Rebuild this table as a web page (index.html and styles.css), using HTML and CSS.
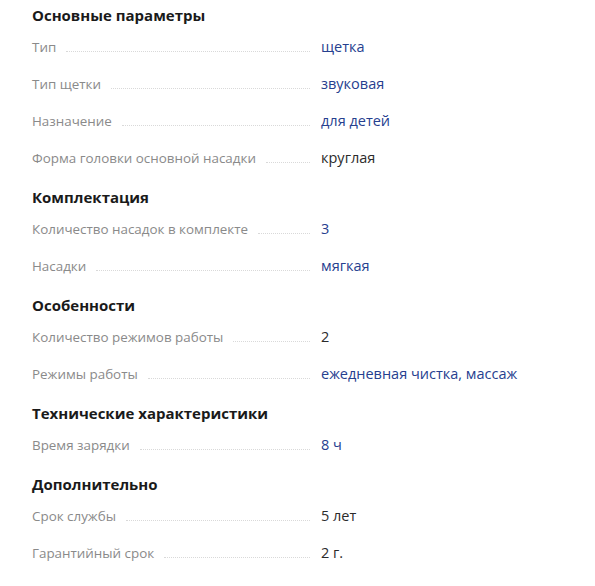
FILE: index.html
```html
<!DOCTYPE html>
<html lang="ru">
<head>
<meta charset="utf-8">
<title>Характеристики</title>
<link rel="stylesheet" href="styles.css">
</head>
<body>
<div class="specs">
  <section class="group">
    <h2 class="group-title">Основные параметры</h2>
    <dl class="list">
      <div class="row"><dt class="label"><span>Тип</span></dt><dd class="value link">щетка</dd></div>
      <div class="row"><dt class="label"><span>Тип щетки</span></dt><dd class="value link">звуковая</dd></div>
      <div class="row"><dt class="label"><span>Назначение</span></dt><dd class="value link">для детей</dd></div>
      <div class="row"><dt class="label"><span>Форма головки основной насадки</span></dt><dd class="value">круглая</dd></div>
    </dl>
  </section>
  <section class="group">
    <h2 class="group-title">Комплектация</h2>
    <dl class="list">
      <div class="row"><dt class="label"><span>Количество насадок в комплекте</span></dt><dd class="value link">3</dd></div>
      <div class="row"><dt class="label"><span>Насадки</span></dt><dd class="value link">мягкая</dd></div>
    </dl>
  </section>
  <section class="group">
    <h2 class="group-title">Особенности</h2>
    <dl class="list">
      <div class="row"><dt class="label"><span>Количество режимов работы</span></dt><dd class="value">2</dd></div>
      <div class="row"><dt class="label"><span>Режимы работы</span></dt><dd class="value link">ежедневная чистка, массаж</dd></div>
    </dl>
  </section>
  <section class="group">
    <h2 class="group-title">Технические характеристики</h2>
    <dl class="list">
      <div class="row"><dt class="label"><span>Время зарядки</span></dt><dd class="value link">8 ч</dd></div>
    </dl>
  </section>
  <section class="group">
    <h2 class="group-title">Дополнительно</h2>
    <dl class="list">
      <div class="row"><dt class="label"><span>Срок службы</span></dt><dd class="value">5 лет</dd></div>
      <div class="row"><dt class="label"><span>Гарантийный срок</span></dt><dd class="value">2 г.</dd></div>
    </dl>
  </section>
</div>
</body>
</html>
```
FILE: styles.css
```css
html, body {
  margin: 0;
  padding: 0;
  background: #ffffff;
}
body {
  font-family: "Open Sans", "Noto Sans", Arial, sans-serif;
  color: #333333;
}
.specs {
  padding: 4px 0 0 32px;
}
.group + .group {
  margin-top: 10px;
}
.group-title {
  margin: 0;
  padding: 0 0 2px;
  font-size: 15px;
  line-height: 22px;
  font-weight: 700;
  color: #1a1a1a;
}
.list {
  margin: 0;
}
.row {
  display: grid;
  grid-template-columns: 278px 1fr;
  column-gap: 11px;
  padding: 9px 0 8px;
  line-height: 20px;
}
.label {
  display: flex;
  align-items: baseline;
  margin: 0;
  font-size: 13.4px;
  color: #8a8a8a;
}
.label::after {
  content: "";
  flex: 1;
  margin-left: 10px;
  border-bottom: 1px dotted #d9d9d9;
}
.value {
  margin: 0;
  font-size: 14.5px;
  color: #2b2b2b;
}
.value.link {
  color: #26408f;
}
```
